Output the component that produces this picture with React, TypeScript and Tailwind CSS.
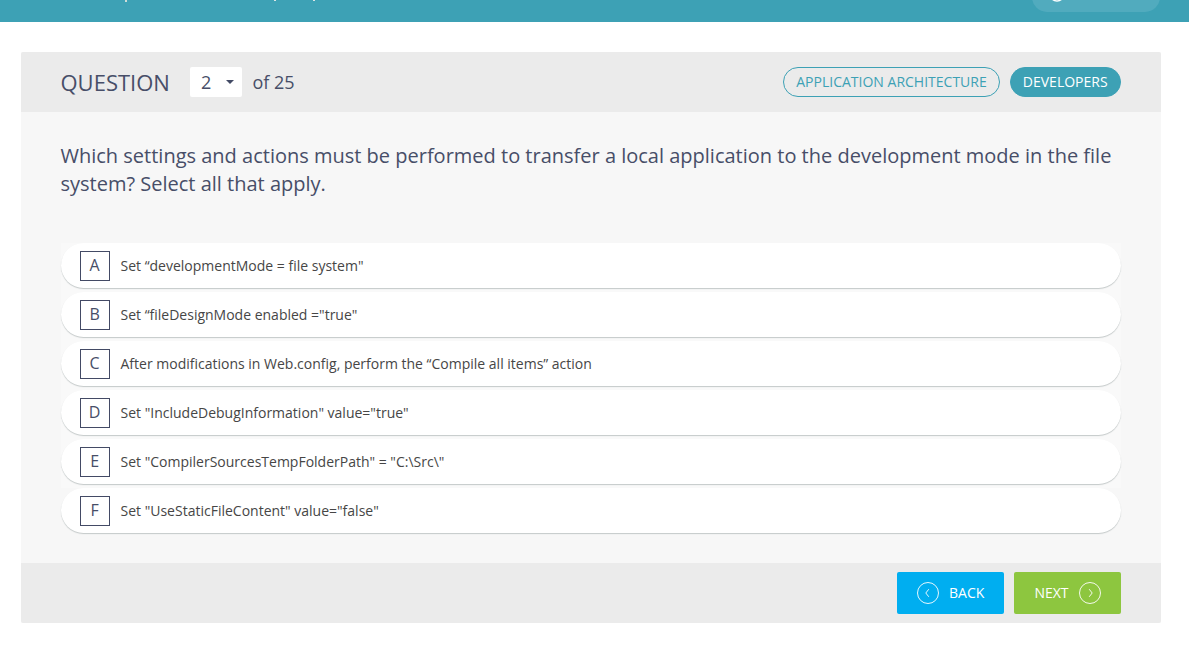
import React from "react";

const answers: string[] = [
  "Set “developmentMode = file system\"",
  "Set “fileDesignMode enabled =\"true\"",
  "After modifications in Web.config, perform the “Compile all items” action",
  "Set \"IncludeDebugInformation\" value=\"true\"",
  "Set \"CompilerSourcesTempFolderPath\" = \"C:\\Src\\\"",
  "Set \"UseStaticFileContent\" value=\"false\"",
];

function TopBar() {
  return (
    <header className="flex h-[22px] items-start justify-between overflow-hidden bg-[#3da1b5] pr-[29px] pl-[125px]">
      <div className="flex items-start">
        <span className="h-[2px] w-[2px] bg-[#cfdcd8]" />
        <span className="ml-[147px] h-px w-[2px] bg-[#dbe6e6]" />
        <span className="ml-[37px] h-px w-[2px] bg-[#dbe6e6]" />
      </div>
      <div className="-mt-[18px] h-[30px] w-[128px] rounded-full bg-[#51abbe] pl-[17px]">
        <svg className="mt-[4px] block" width="16" height="16" viewBox="0 0 16 16" fill="none" stroke="#fff" strokeWidth="1.5">
          <circle cx="8" cy="8" r="7" />
        </svg>
      </div>
    </header>
  );
}

function Chevron({ left = false }: { left?: boolean }) {
  return (
    <svg width="22" height="22" viewBox="0 0 22 22" fill="none" stroke="#fff" className="shrink-0">
      <circle cx="11" cy="11" r="10.5" strokeWidth="0.9" />
      <path d={left ? "M11.8 7.2 L8.8 11 L11.8 14.8" : "M10.2 7.2 L13.2 11 L10.2 14.8"} strokeWidth="0.9" />
    </svg>
  );
}

export default function App() {
  return (
    <div className="min-h-[654px] bg-white font-['Open_Sans',sans-serif] text-[#474e68]">
      <TopBar />
      <main className="mt-[30px] ml-[21px] w-[1140px] overflow-hidden rounded-[2px] bg-[#f7f7f7]">
        <div className="flex h-[60px] items-center justify-between bg-[#ebebeb] pr-[40px] pl-[39.5px]">
          <div className="flex items-center">
            <h1 className="w-[129.5px] text-[22px] leading-[30px] whitespace-nowrap">QUESTION</h1>
            <button className="flex h-[30px] w-[52px] items-center justify-between rounded-[2px] bg-white pr-[8px] pl-[11px] text-[18px] leading-[30px]">
              2
              <svg width="8" height="4" viewBox="0 0 8 4" fill="#434a65">
                <path d="M0 0h8L4 4z" />
              </svg>
            </button>
            <span className="ml-[10.4px] text-[18px] leading-[30px]">of 25</span>
          </div>
          <div className="flex gap-[10px] text-[14px] leading-[28px] whitespace-nowrap">
            <span className="flex h-[30px] w-[217px] justify-center rounded-full border border-[#3da1b5] text-[#3da1b5]">APPLICATION ARCHITECTURE</span>
            <span className="flex h-[30px] w-[111px] justify-center rounded-full border border-[#3da1b5] bg-[#3da1b5] pr-[0.6px] text-white">DEVELOPERS</span>
          </div>
        </div>
        <section className="h-[451px] px-[40px] pt-[30px]">
          <p className="-ml-[0.5px] h-[101px] text-[20px] leading-[28px]">
            Which settings and actions must be performed to transfer a local application to the development mode in the file
            <br />
            system? Select all that apply.
          </p>
          <ul>
            {answers.map((answer, i) => (
              <li key={answer} className="h-[49px] bg-[#f9f9f9] last:h-[46px] last:bg-transparent">
                <div className="flex h-[45px] items-center rounded-full bg-white pl-[19px] shadow-[0_1px_1px_#c4c9c9]">
                  <span className="flex h-[30px] w-[30px] items-start justify-center border border-[#434a65] pr-[0.8px] text-[16px] leading-[26px]">
                    {"ABCDEF"[i]}
                  </span>
                  <span className="ml-[10.5px] text-[14px] leading-[20px] text-[#464646]">{answer}</span>
                </div>
              </li>
            ))}
          </ul>
        </section>
        <footer className="flex h-[60px] items-center justify-end gap-[10px] bg-[#ebebeb] px-[40px] text-[14px] leading-[20px] text-white">
          <button className="flex h-[42px] w-[107px] items-center gap-[10px] rounded-[2px] bg-[#00aef0] pl-[20px]">
            <Chevron left />
            BACK
          </button>
          <button className="flex h-[42px] w-[107px] items-center justify-end gap-[10.5px] rounded-[2px] bg-[#8dc63f] pr-[20px]">
            NEXT
            <Chevron />
          </button>
        </footer>
      </main>
    </div>
  );
}
